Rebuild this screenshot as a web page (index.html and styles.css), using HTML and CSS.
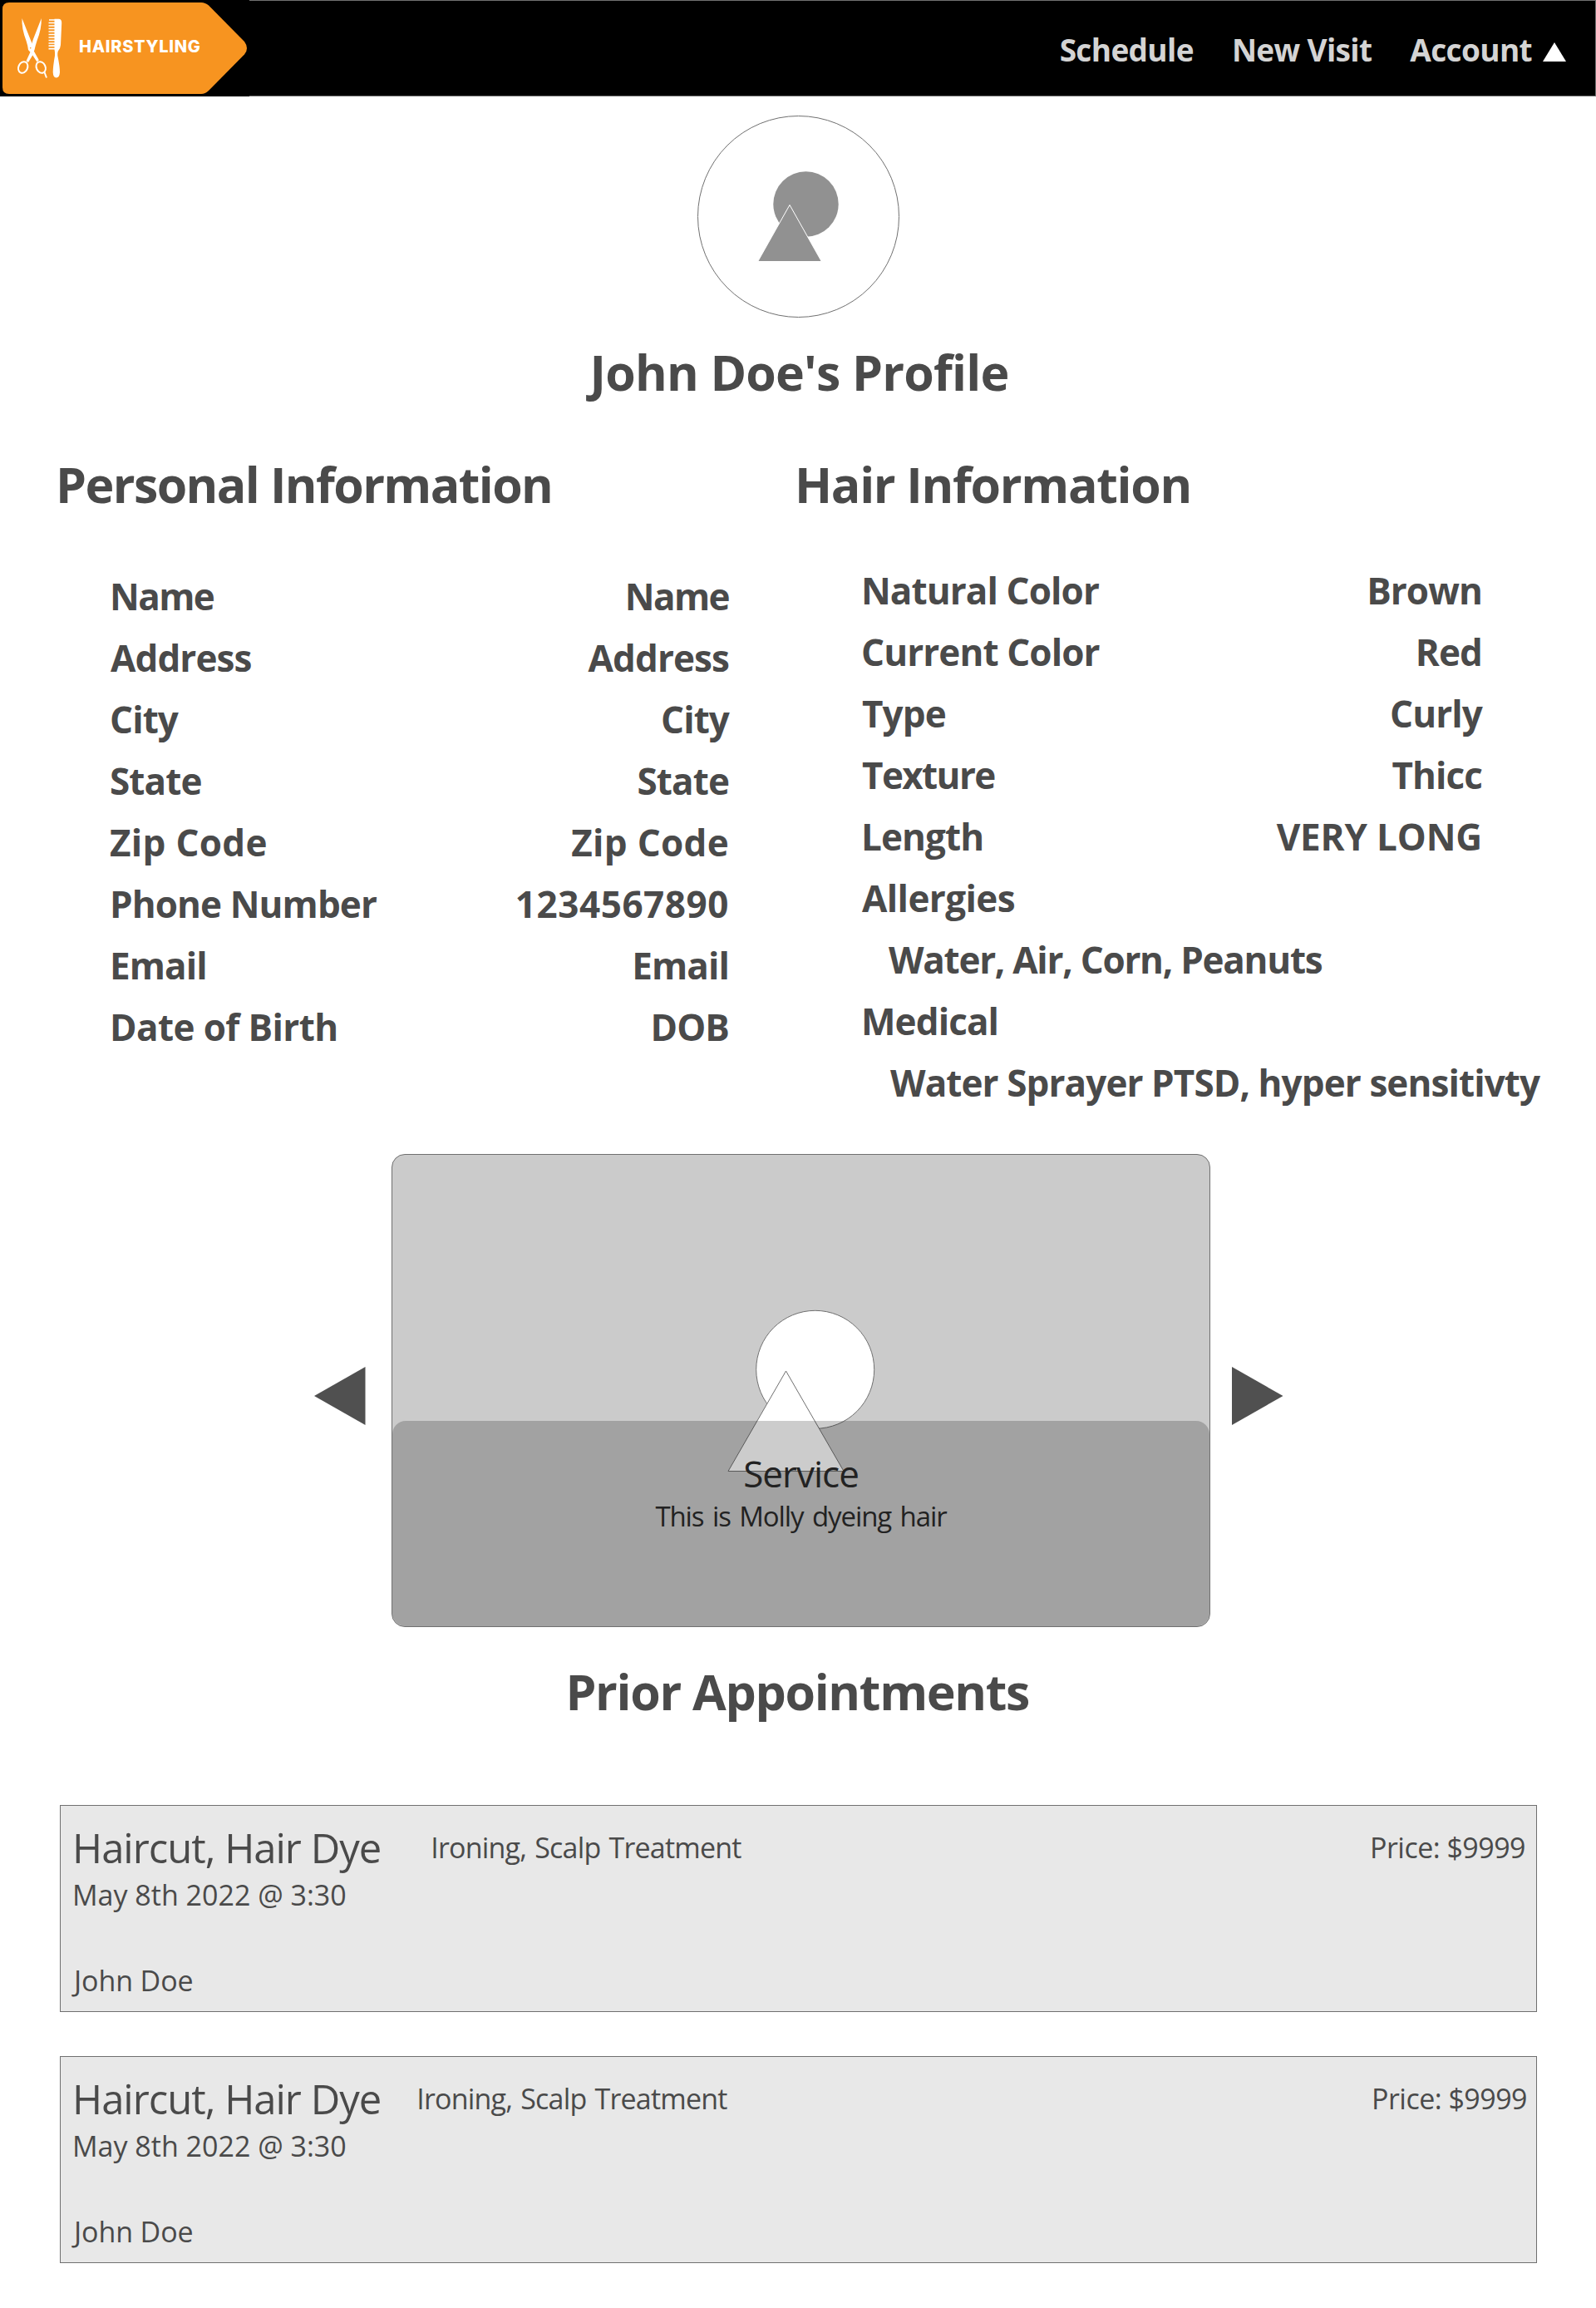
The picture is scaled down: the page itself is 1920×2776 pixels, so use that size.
FILE: index.html
```html
<!DOCTYPE html>
<html lang="en">
<head>
<meta charset="utf-8">
<title>John Doe's Profile</title>
<link rel="stylesheet" href="styles.css">
</head>
<body>
<header class="topbar">
  <a class="logo" href="#">
    <svg class="logo-art" viewBox="0 0 300 116" aria-hidden="true">
      <rect width="300" height="116" fill="#000"/>
      <path fill="#f79420" d="M11 3H242Q247 3 251 6.500L294 50Q300 58 294 65.500L251 109Q247 113 242 113H11Q3 113 3 105V11Q3 3 11 3Z"/>
      <g fill="#fff">
        <path d="M26.500 22Q25.800 34 31.500 49Q33.500 55 34 60L38 64.500L44.500 74.500L46.800 72.300L40.800 61.500Q40.500 56 37 48.500Z"/>
        <path d="M49.800 22Q50.300 34 44.500 49Q42.500 55 41.500 60L40.500 62.500L37.500 55L40 47Z"/>
        <path d="M36.500 62.500L31.500 73.500L34 75L39.500 66Z"/>
        <path d="M65.500 22.800H70.500Q74.300 23 74.200 27.500L73 54Q72.500 58.500 70.500 60.500Q69 62 69.300 67Q72 80 72 87Q71.500 93.500 67.700 93.500Q64 93.500 63.700 87Q63.700 80 66 67Q66.200 62 65.500 59.500Z"/>
      </g>
      <path stroke="#fff" stroke-width="1.700" d="M59 24H66M58.500 27.500H66M58.500 31H66M58.500 34.500H66M58.500 38H66M58.500 41.500H66M58.500 45H66M58.500 48.500H66M58.500 52H66M58.500 55.200H66M58.500 58.700H66"/>
      <g fill="none" stroke="#fff" stroke-width="2">
        <ellipse cx="27.700" cy="81" rx="5.400" ry="7" transform="rotate(25 27.700 81)"/>
        <ellipse cx="49.200" cy="81" rx="5.400" ry="7" transform="rotate(-25 49.200 81)"/>
        <path d="M53.500 87L56 93.500"/>
      </g>
      <circle cx="36.700" cy="57.700" r=".8" fill="#f79420"/>
    </svg>
    <span class="logo-text">HAIRSTYLING</span>
  </a>
  <nav class="nav">
    <a href="#">Schedule</a>
    <a href="#">New Visit</a>
    <a href="#" class="account">Account
      <svg class="caret" viewBox="0 0 28 23" aria-hidden="true"><path fill="#fff" d="M14 0L28 23H0Z"/></svg>
    </a>
  </nav>
</header>

<main>
  <svg class="avatar" viewBox="0 0 243 243" role="img" aria-label="Profile picture">
    <circle cx="121.500" cy="121.500" r="121" fill="#fff" stroke="#707070"/>
    <circle cx="130.500" cy="106.500" r="39.200" fill="#919191"/>
    <path d="M111 107.500L149.300 175.500H72.700Z" fill="#919191" stroke="#fff"/>
  </svg>
  <h1 class="heading title">John Doe's Profile</h1>

  <div class="info">
    <section class="personal">
      <h2 class="heading heading-personal">Personal Information</h2>
      <dl class="rows">
        <div class="row"><dt class="tight">Name</dt><dd class="tight">Name</dd></div>
        <div class="row"><dt class="nudge">Address</dt><dd>Address</dd></div>
        <div class="row"><dt>City</dt><dd>City</dd></div>
        <div class="row"><dt>State</dt><dd>State</dd></div>
        <div class="row"><dt class="loose">Zip Code</dt><dd class="loose">Zip Code</dd></div>
        <div class="row"><dt>Phone Number</dt><dd class="digits">1234567890</dd></div>
        <div class="row"><dt>Email</dt><dd>Email</dd></div>
        <div class="row"><dt class="birth">Date of Birth</dt><dd>DOB</dd></div>
      </dl>
    </section>
    <section class="hair">
      <h2 class="heading">Hair Information</h2>
      <dl class="rows">
        <div class="row"><dt>Natural Color</dt><dd>Brown</dd></div>
        <div class="row"><dt>Current Color</dt><dd>Red</dd></div>
        <div class="row"><dt class="nudge">Type</dt><dd>Curly</dd></div>
        <div class="row"><dt class="nudge tight">Texture</dt><dd>Thicc</dd></div>
        <div class="row"><dt>Length</dt><dd class="caps">VERY LONG</dd></div>
        <div class="row"><dt class="nudge allergies">Allergies</dt></div>
        <div class="row"><dd class="note note-allergies">Water, Air, Corn, Peanuts</dd></div>
        <div class="row"><dt>Medical</dt></div>
        <div class="row"><dd class="note note-medical">Water Sprayer PTSD, hyper sensitivty</dd></div>
      </dl>
    </section>
  </div>

  <section class="carousel">
    <svg class="arrow" viewBox="0 0 62 70" aria-label="Previous"><path fill="#505050" d="M0 35L61.500 0V70Z"/></svg>
    <figure class="slide">
      <svg class="slide-art" viewBox="0 0 983 567" aria-hidden="true">
        <g fill="#fff" stroke="#707070">
          <circle cx="508.700" cy="258.300" r="71"/>
          <path d="M473.500 260L543 380.500H404Z"/>
        </g>
      </svg>
      <figcaption class="caption">
        <span class="caption-title">Service</span>
        <span class="caption-text">This is Molly dyeing hair</span>
      </figcaption>
    </figure>
    <svg class="arrow arrow-next" viewBox="0 0 62 70" aria-label="Next"><path fill="#505050" d="M61.500 35L0 0V70Z"/></svg>
  </section>

  <h2 class="heading prior">Prior Appointments</h2>
  <section class="appointments">
    <article class="appointment">
      <div class="line">
        <h3 class="services">Haircut, Hair Dye</h3>
        <span class="extras">Ironing, Scalp Treatment</span>
        <span class="price">Price: $9999</span>
      </div>
      <p class="date">May 8th 2022 @ 3:30</p>
      <p class="client">John Doe</p>
    </article>
    <article class="appointment compact">
      <div class="line">
        <h3 class="services">Haircut, Hair Dye</h3>
        <span class="extras">Ironing, Scalp Treatment</span>
        <span class="price">Price: $9999</span>
      </div>
      <p class="date">May 8th 2022 @ 3:30</p>
      <p class="client">John Doe</p>
    </article>
  </section>
</main>
</body>
</html>
```
FILE: styles.css
```css
* {
  box-sizing: border-box;
  margin: 0;
  padding: 0;
}

body {
  width: 1920px;
  min-height: 2776px;
  background: #fff;
  color: #4a4a4a;
  font-family: "Open Sans", "Noto Sans", sans-serif;
  white-space: nowrap;
}

a {
  color: inherit;
  text-decoration: none;
}

svg {
  display: block;
  flex: none;
}

/* Top bar */
.topbar {
  display: flex;
  justify-content: space-between;
  height: 116px;
  background: #000;
  border: 1px solid #707070;
}

.logo {
  position: relative;
  width: 300px;
  height: 116px;
  margin: -1px 0 0 -1px;
}

.logo-art {
  width: 300px;
  height: 116px;
}

.logo-text {
  position: absolute;
  left: 95px;
  top: 41px;
  color: #fff;
  font-family: Inter, "Open Sans", sans-serif;
  font-size: 20px;
  font-weight: 800;
  line-height: 30px;
  letter-spacing: 0.72px;
}

.nav {
  display: flex;
  gap: 46px;
  padding-right: 35px;
  color: #d4d4d4;
  font-size: 37px;
  font-weight: 700;
  line-height: 117px;
  letter-spacing: -0.65px;
}

.account {
  display: flex;
  gap: 13px;
}

.caret {
  width: 28px;
  height: 23px;
  margin-top: 50px;
}

/* Profile */
.avatar {
  width: 243px;
  height: 243px;
  margin: 23px auto 25px 839px;
}

.heading {
  font-size: 59px;
  font-weight: 700;
  line-height: 80px;
  letter-spacing: -1.31px;
}

.title {
  padding-left: 3px;
  text-align: center;
  letter-spacing: -0.8px;
}

.info {
  display: grid;
  grid-template-columns: 889px 1fr;
  margin-top: 55px;
  padding-left: 67px;
}

.heading-personal {
  letter-spacing: -1.6px;
}

.rows {
  width: 746px;
  font-size: 44px;
  font-weight: 700;
  line-height: 74px;
  letter-spacing: -0.9px;
}

.personal .rows {
  margin: 58px 0 0 65px;
  width: 745px;
}

.hair .rows {
  width: 747px;
  margin: 51px 0 0 80px;
}

.row {
  display: flex;
  justify-content: space-between;
}

.nudge {
  padding-left: 1px;
}

.tight {
  letter-spacing: -1.6px;
}

.loose {
  letter-spacing: 0.3px;
}

.birth {
  letter-spacing: -0.6px;
}

.digits {
  letter-spacing: 0.56px;
}

.caps {
  letter-spacing: -0.15px;
}

.allergies {
  letter-spacing: -0.6px;
}

.note-allergies {
  padding-left: 33px;
  letter-spacing: -1.27px;
}

.note-medical {
  padding-left: 35px;
  letter-spacing: -0.9px;
}

/* Carousel */
.carousel {
  display: flex;
  align-items: center;
  margin-top: 49px;
  padding-left: 378px;
}

.arrow {
  width: 62px;
  height: 70px;
  margin-top: 13px;
}

.slide {
  position: relative;
  display: flex;
  flex-direction: column;
  justify-content: flex-end;
  width: 985px;
  height: 569px;
  margin: 0 26px 0 31px;
  overflow: hidden;
  background: #cbcbcb;
  border: 1px solid #707070;
  border-radius: 16px;
}

.slide-art {
  position: absolute;
  inset: 0;
  width: 983px;
  height: 567px;
}

.caption {
  position: relative;
  display: flex;
  flex-direction: column;
  align-items: center;
  height: 247px;
  padding-top: 34px;
  background: rgba(0, 0, 0, 0.2);
  border-radius: 16px;
  color: #222;
}

.caption-title {
  font-size: 44px;
  line-height: 58px;
  letter-spacing: -1px;
}

.caption-text {
  font-size: 33px;
  line-height: 46px;
  letter-spacing: -1.1px;
  word-spacing: 3px;
}

/* Appointments */
.prior {
  margin-top: 37px;
  padding-right: 1.5px;
  text-align: center;
}

.appointments {
  display: grid;
  gap: 53px;
  margin: 97px 71px 0 72px;
}

.appointment {
  height: 249px;
  padding: 15px 13px 0 14px;
  background: #e8e8e8;
  border: 1px solid #707070;
  font-size: 34px;
  line-height: 44px;
}

.line {
  display: flex;
  line-height: 70px;
}

.services {
  font-size: 49px;
  font-weight: 400;
  letter-spacing: -1px;
}

.extras {
  margin-left: 60px;
  letter-spacing: -0.8px;
  word-spacing: 2px;
}

.compact .extras {
  margin-left: 43px;
}

.price {
  margin-left: auto;
  letter-spacing: -0.53px;
}

.compact .price {
  margin-right: -2px;
}

.client {
  margin: 59px 0 0 2px;
  letter-spacing: -0.1px;
}
```
